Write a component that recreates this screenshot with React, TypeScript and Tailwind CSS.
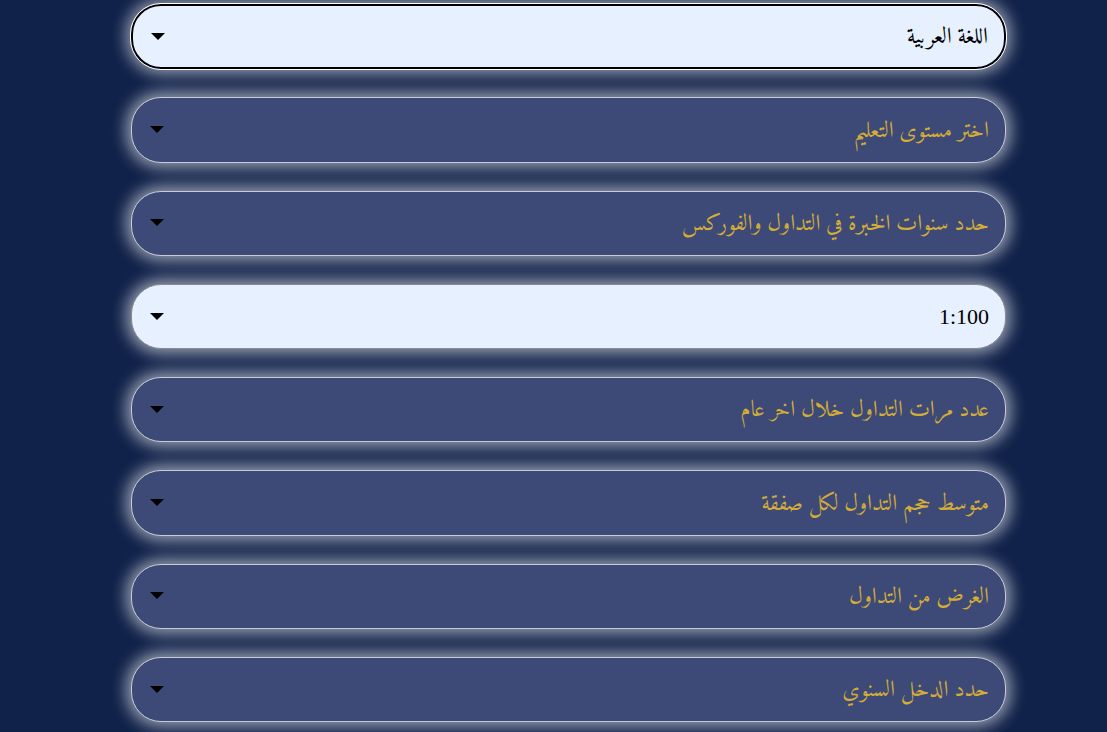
import React from 'react';

type Field = { label: string; filled?: boolean; focused?: boolean; latin?: boolean };

const fields: Field[] = [
  { label: 'اللغة العربية', filled: true, focused: true },
  { label: 'اختر مستوى التعليم' },
  { label: 'حدد سنوات الخبرة في التداول والفوركس' },
  { label: '1:100', filled: true, latin: true },
  { label: 'عدد مرات التداول خلال اخر عام' },
  { label: 'متوسط حجم التداول لكل صفقة' },
  { label: 'الغرض من التداول' },
  { label: 'حدد الدخل السنوي' },
];

const Caret = () => (
  <svg width="14" height="8" viewBox="0 0 14 8" className="shrink-0">
    <path d="M0 0 L14 0 L7 7 Z" fill="#000" />
  </svg>
);

export default function App() {
  return (
    <div className="min-h-screen w-full bg-[#11224a] overflow-hidden font-['Liberation_Serif',Amiri,serif]">
      <div dir="rtl" className="ml-[131px] w-[875px] pt-[4px] flex flex-col gap-[28px]">
        {fields.map((f) => (
          <div
            key={f.label}
            className={`h-[65.3px] rounded-[30px] flex items-center justify-between pr-[16px] pl-[18px] leading-none shadow-[0_0_15px_5px_rgba(255,255,255,0.55)] ${
              f.latin ? 'text-[22px]' : 'text-[22.8px]'
            } ${
              f.filled
                ? 'bg-[#e6f0fe] text-black'
                : 'bg-[#3d4a78] text-[#d4ad37] border border-[#c8ccd8]'
            } ${f.focused ? 'border-2 border-black outline outline-1 outline-white' : f.filled ? 'border border-[#8a8a8a]' : ''}`}
          >
            <span>{f.label}</span>
            <Caret />
          </div>
        ))}
      </div>
    </div>
  );
}
